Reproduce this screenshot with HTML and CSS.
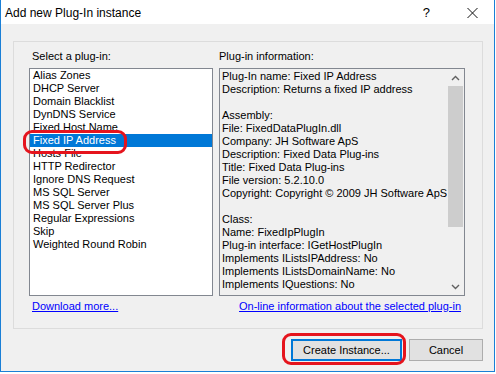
FILE: index.html
```html
<!DOCTYPE html>
<html>
<head>
<meta charset="utf-8">
<link rel="stylesheet" href="styles.css">
</head>
<body>
<div class="window">
  <div class="titlebar">
    <span class="title">Add new Plug-In instance</span>
    <span class="help">?</span>
    <svg class="close" width="11" height="10" viewBox="0 0 11 10"><path d="M0.5 0 L10.5 10 M10.5 0 L0.5 10" stroke="#111" stroke-width="1" fill="none"/></svg>
  </div>
  <div class="content">
    <div class="group">
      <div class="col left">
        <div class="label">Select a plug-in:</div>
        <div class="listbox">
          <div class="item">Alias Zones</div>
          <div class="item">DHCP Server</div>
          <div class="item">Domain Blacklist</div>
          <div class="item">DynDNS Service</div>
          <div class="item">Fixed Host Name</div>
          <div class="item selected">Fixed IP Address<span class="ring ring-item"></span></div>
          <div class="item">Hosts File</div>
          <div class="item">HTTP Redirector</div>
          <div class="item">Ignore DNS Request</div>
          <div class="item">MS SQL Server</div>
          <div class="item">MS SQL Server Plus</div>
          <div class="item">Regular Expressions</div>
          <div class="item">Skip</div>
          <div class="item">Weighted Round Robin</div>
        </div>
        <div class="linkrow"><a class="link">Download more...</a></div>
      </div>
      <div class="col right">
        <div class="label">Plug-in information:</div>
        <div class="infobox">
          <div class="infotext">Plug-In name: Fixed IP Address
Description: Returns a fixed IP address

Assembly:
File: FixedDataPlugIn.dll
Company: JH Software ApS
Description: Fixed Data Plug-ins
Title: Fixed Data Plug-ins
File version: 5.2.10.0
Copyright: Copyright © 2009 JH Software ApS

Class:
Name: FixedIpPlugIn
Plug-in interface: IGetHostPlugIn
Implements IListsIPAddress: No
Implements IListsDomainName: No
Implements IQuestions: No</div>
          <div class="scrollbar">
            <div class="arrow"><svg width="9" height="6" viewBox="0 0 9 6"><path d="M1 5 L4.5 1.5 L8 5" stroke="#606060" stroke-width="1.4" fill="none"/></svg></div>
            <div class="thumb"></div>
            <div class="track"></div>
            <div class="arrow"><svg width="9" height="6" viewBox="0 0 9 6"><path d="M1 1 L4.5 4.5 L8 1" stroke="#606060" stroke-width="1.4" fill="none"/></svg></div>
          </div>
        </div>
        <div class="linkrow right-link"><a class="link">On-line information about the selected plug-in</a></div>
      </div>
    </div>
    <div class="buttons">
      <div class="btn default">Create Instance...<span class="ring ring-btn"></span></div>
      <div class="btn cancel">Cancel</div>
    </div>
  </div>
</div>
</body>
</html>
```
FILE: styles.css
```css
body {
  margin: 0;
  background: #fff;
  font-family: "Liberation Sans", Arial, sans-serif;
  color: #000;
}
.window {
  width: 495px;
  height: 372px;
  box-sizing: border-box;
  border: 1px solid #1a7fd6;
  border-top: none;
  background: #f0f0f0;
  display: flex;
  flex-direction: column;
}
.titlebar {
  height: 24px;
  background: #fff;
  display: flex;
  align-items: center;
  font-size: 12px;
  padding-top: 1px;
  box-sizing: border-box;
}
.title {
  flex: 1;
  padding-left: 4px;
}
.help {
  font-size: 13px;
  margin-right: 37px;
}
.close {
  margin-right: 16px;
}
.content {
  padding: 17px 11px 0 12px;
}
.group {
  border: 1px solid #dcdcdc;
  height: 288px;
  box-sizing: border-box;
  padding: 8px 17px 0 15px;
  display: flex;
  gap: 6px;
  font-size: 11px;
}
.col.left { width: 184px; }
.col.right { width: 246px; }
.label {
  height: 13px;
  line-height: 13px;
  margin-bottom: 5px;
  padding-left: 3px;
}
.col.right .label { padding-left: 0; }
.listbox {
  height: 228px;
  box-sizing: border-box;
  border: 1px solid #828790;
  background: #fff;
}
.item {
  height: 13px;
  line-height: 13px;
  padding-left: 3px;
  white-space: nowrap;
}
.item.selected {
  background: #0078d7;
  color: #fff;
  position: relative;
}
.ring {
  position: absolute;
  box-sizing: border-box;
  border: 3px solid #e5141d;
  border-radius: 9px;
}
.ring-item {
  left: -7px;
  top: -4px;
  width: 104px;
  height: 24px;
}
.infobox {
  height: 228px;
  box-sizing: border-box;
  border: 1px solid #828790;
  background: #f0f0f0;
  display: flex;
}
.infotext {
  flex: 1;
  padding: 1px 0 0 2px;
  line-height: 13px;
  white-space: pre;
  overflow: hidden;
}
.scrollbar {
  width: 17px;
  display: flex;
  flex-direction: column;
  background: #f0f0f0;
}
.arrow {
  height: 17px;
  display: flex;
  align-items: center;
  justify-content: center;
}
.thumb {
  height: 141px;
  margin: 0 1px;
  background: #cdcdcd;
}
.track { flex: 1; }
.linkrow {
  margin-top: 4px;
  line-height: 13px;
  padding-left: 3px;
}
.linkrow.right-link {
  text-align: right;
  padding-left: 0;
  padding-right: 4px;
}
.link {
  color: #0000ff;
  text-decoration: underline;
}
.buttons {
  display: flex;
  justify-content: flex-end;
  gap: 7px;
  margin-top: 10px;
}
.btn {
  height: 22px;
  box-sizing: border-box;
  background: #e1e1e1;
  border: 1px solid #adadad;
  font-size: 11px;
  display: flex;
  align-items: center;
  justify-content: center;
  position: relative;
}
.btn.default {
  width: 111px;
  border: 2px solid #0078d7;
}
.btn.cancel { width: 74px; }
.ring-btn {
  left: -11px;
  top: -8px;
  width: 124px;
  height: 32px;
}
```
